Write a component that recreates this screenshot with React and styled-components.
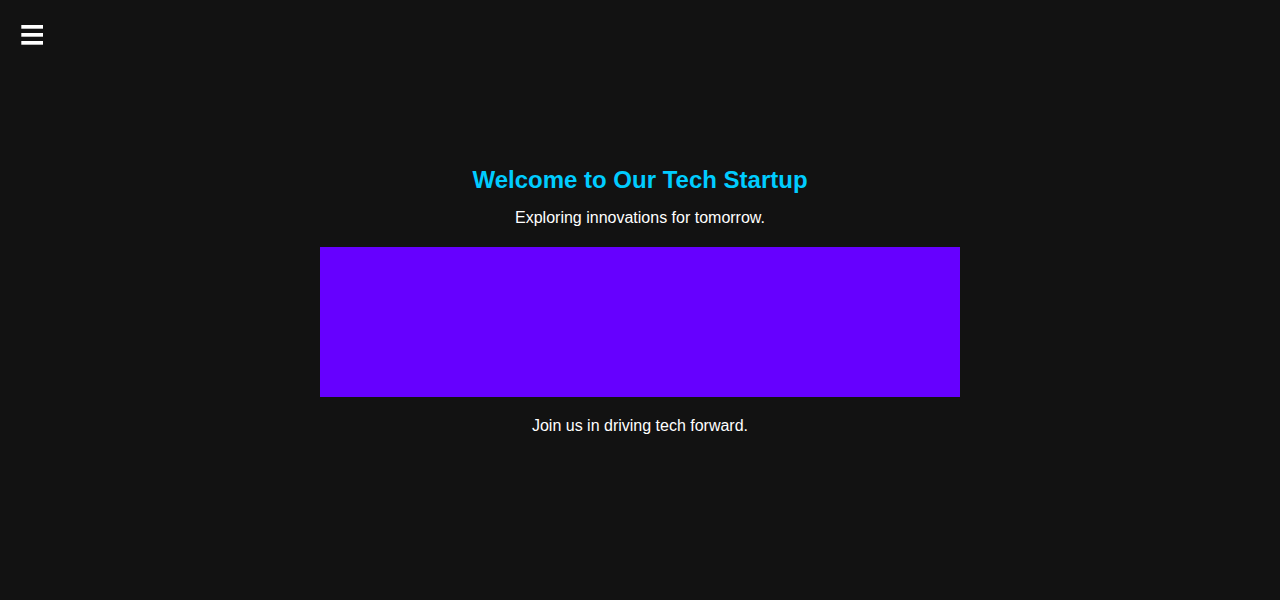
import React from "react";
import styled, { createGlobalStyle } from "styled-components";

const Global = createGlobalStyle`
  html, body { margin: 0; padding: 0; background: #121212; }
  body { font-family: "Liberation Sans", Arial, sans-serif; color: #ffffff; }
`;

const Page = styled.main`
  min-height: 100vh;
  display: flex;
  align-items: center;
  justify-content: center;
`;

const MenuButton = styled.button`
  position: fixed;
  top: 25px;
  left: 21px;
  display: block;
  background: none;
  border: none;
  padding: 0;
  color: #ffffff;
  line-height: 0;
  cursor: pointer;
`;

const Content = styled.section`
  width: 640px;
  display: flex;
  flex-direction: column;
  align-items: center;
  text-align: center;
`;

const Title = styled.h1`
  margin: 0;
  padding-top: 1px;
  font-size: 24px;
  line-height: 28px;
  font-weight: 700;
  color: #00ccff;
`;

const Text = styled.p`
  margin: ${(p) => p.$top}px 0 0;
  font-size: 16px;
  line-height: 18px;
  color: #ffffff;
`;

const Banner = styled.div`
  margin-top: 20px;
  width: 640px;
  height: 150px;
  background: #6600ff;
`;

const MenuIcon = () => (
  <svg width="22" height="20" viewBox="0 0 22 20" fill="currentColor" aria-hidden="true">
    <rect x="0.3" y="0" width="21.7" height="3.7" />
    <rect x="0.3" y="8" width="21.7" height="3.7" />
    <rect x="0.3" y="16" width="21.7" height="3.7" />
  </svg>
);

export default function App() {
  return (
    <>
      <Global />
      <MenuButton aria-label="Menu">
        <MenuIcon />
      </MenuButton>
      <Page>
        <Content>
          <Title>Welcome to Our Tech Startup</Title>
          <Text $top={15}>Exploring innovations for tomorrow.</Text>
          <Banner />
          <Text $top={20}>Join us in driving tech forward.</Text>
        </Content>
      </Page>
    </>
  );
}
